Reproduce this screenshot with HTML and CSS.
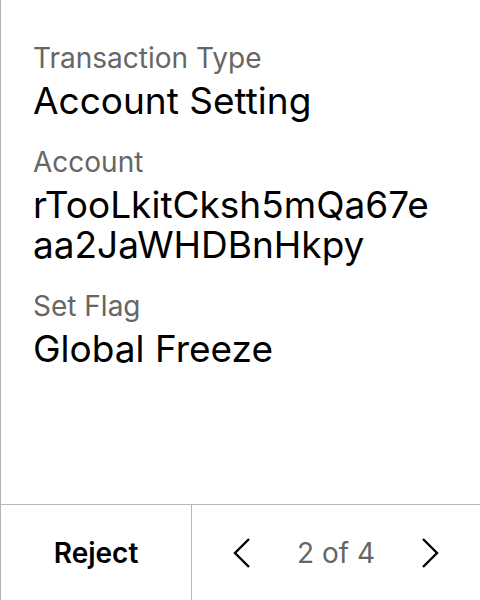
FILE: index.html
```html
<!DOCTYPE html>
<html>
<head>
<meta charset="utf-8">
<link rel="stylesheet" href="styles.css">
</head>
<body>
<div class="screen">
  <main class="details">
    <div class="field">
      <div class="label">Transaction Type</div>
      <div class="value">Account Setting</div>
    </div>
    <div class="field">
      <div class="label">Account</div>
      <div class="value address">rTooLkitCksh5mQa67eaa2JaWHDBnHkpy</div>
    </div>
    <div class="field">
      <div class="label">Set Flag</div>
      <div class="value">Global Freeze</div>
    </div>
  </main>
  <footer class="footer">
    <button class="reject">Reject</button>
    <div class="pager">
      <svg class="chev" width="20" height="32" viewBox="0 0 20 32"><path d="M17 2 L3 16 L17 30" fill="none" stroke="#000" stroke-width="2.4"/></svg>
      <span class="count">2 of 4</span>
      <svg class="chev" width="20" height="32" viewBox="0 0 20 32"><path d="M3 2 L17 16 L3 30" fill="none" stroke="#000" stroke-width="2.4"/></svg>
    </div>
  </footer>
</div>
</body>
</html>
```

FILE: styles.css
```css
html, body {
  margin: 0;
  padding: 0;
  background: #fff;
}
body {
  font-family: Inter, "Noto Sans", sans-serif;
}
.screen {
  width: 480px;
  height: 600px;
  box-sizing: border-box;
  border-left: 1px solid #b3b3b3;
  display: flex;
  flex-direction: column;
}
.details {
  flex: 1;
  padding: 41px 42px 0 32px;
  display: flex;
  flex-direction: column;
  gap: 24px;
}
.field {
  display: flex;
  flex-direction: column;
  gap: 6px;
}
.label {
  font-size: 28px;
  line-height: 34px;
  color: #666;
}
.value {
  font-size: 37px;
  line-height: 40px;
  color: #000;
}
.address {
  word-break: break-all;
}
.footer {
  height: 95px;
  border-top: 1px solid #b8b8b8;
  display: grid;
  grid-template-columns: 191px 1fr;
}
.reject {
  border: none;
  border-right: 1px solid #b8b8b8;
  background: #fff;
  font-family: Inter, "Noto Sans", sans-serif;
  font-size: 28px;
  font-weight: 600;
  color: #000;
  padding: 0;
}
.pager {
  display: flex;
  align-items: center;
  justify-content: space-between;
  padding: 0 40px;
}
.count {
  font-size: 28px;
  color: #666;
}
.chev {
  display: block;
}
```
